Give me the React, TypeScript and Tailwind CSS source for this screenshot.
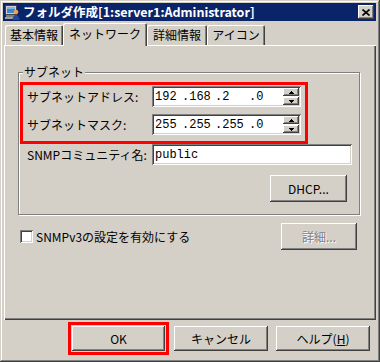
import React from "react";

const raised =
  "shadow-[inset_-1px_-1px_#404040,inset_1px_1px_#ffffff,inset_-2px_-2px_#808080,inset_2px_2px_#d4d0c8]";
const sunken =
  "shadow-[inset_1px_1px_#808080,inset_-1px_-1px_#ffffff,inset_2px_2px_#404040,inset_-2px_-2px_#d4d0c8]";

function TitleIcon() {
  return (
    <svg width="16" height="16" viewBox="0 0 16 16" shapeRendering="crispEdges">
      <rect x="1.5" y="1.5" width="11" height="9" fill="#d4d0c8" stroke="#404040" />
      <rect x="3" y="3" width="8" height="6" fill="#3f86d0" />
      <rect x="3" y="3" width="8" height="2" fill="#7fb6ea" />
      <rect x="2" y="11" width="9" height="2" fill="#808080" />
      <rect x="1" y="13" width="11" height="2" fill="#a0a0a0" />
      <circle cx="12" cy="8" r="2.3" fill="#f2a04a" shapeRendering="auto" />
      <path d="M8.5 16 Q9 11 12 11 Q15 11 15.5 16 Z" fill="#1d4aa0" shapeRendering="auto" />
    </svg>
  );
}

function Spinner() {
  return (
    <div className="flex flex-col gap-[1px] mr-[2px]">
      {["up", "down"].map((d) => (
        <div key={d} className={`w-[16px] h-[8px] bg-[#d4d0c8] flex items-center justify-center ${raised}`}>
          <svg width="5" height="3" viewBox="0 0 5 3" shapeRendering="crispEdges">
            {d === "up" ? <polygon points="2.5,0 5,3 0,3" fill="#000" /> : <polygon points="0,0 5,0 2.5,3" fill="#000" />}
          </svg>
        </div>
      ))}
    </div>
  );
}

function IpField({ parts }: { parts: string[] }) {
  return (
    <div className={`w-[149px] h-[21px] bg-white flex items-center ${sunken}`}>
      <div className="flex flex-1 pl-[3px] font-['Liberation_Mono',monospace] text-[12px] leading-none">
        <span className="w-[27px]">{parts[0]}</span>
        <span className="w-[33px]">.{parts[1]}</span>
        <span className="w-[34px]">.{parts[2]}</span>
        <span>.{parts[3]}</span>
      </div>
      <Spinner />
    </div>
  );
}

function Tab({ label, active, w }: { label: string; active?: boolean; w: string }) {
  if (active) {
    return (
      <div
        className={`${w} h-[23px] mb-[-1px] relative z-10 bg-[#d4d0c8] rounded-t-[2px] flex items-center justify-center pb-[2px] shadow-[inset_1px_1px_#ffffff,inset_-1px_0_#404040,inset_-2px_0_#808080]`}
      >
        {label}
      </div>
    );
  }
  return (
    <div
      className={`${w} h-[20px] bg-[#d4d0c8] rounded-t-[2px] flex items-center justify-center shadow-[inset_1px_1px_#ffffff,inset_-1px_0_#404040,inset_-2px_0_#808080]`}
    >
      {label}
    </div>
  );
}

export default function App() {
  return (
    <div className="w-[380px] h-[362px] bg-[#d4d0c8] p-[3px] flex flex-col text-black text-[12px] font-['Noto_Sans_CJK_JP',sans-serif] shadow-[inset_-1px_-1px_#404040,inset_1px_1px_#d4d0c8,inset_-2px_-2px_#808080,inset_2px_2px_#ffffff]">
      {/* title bar */}
      <div className="h-[18px] w-[373px] bg-[#0a246a] flex items-center pl-[1px] pr-[2px]">
        <TitleIcon />
        <span className="ml-[3px] text-white font-bold text-[12.5px] leading-none">フォルダ作成[1:server1:Administrator]</span>
        <div className={`ml-auto w-[16px] h-[14px] bg-[#d4d0c8] flex items-center justify-center ${raised}`}>
          <svg width="8" height="7" viewBox="0 0 8 7">
            <path d="M0.5 0.5 L7.5 6.5 M7.5 0.5 L0.5 6.5" stroke="#000" strokeWidth="1.6" />
          </svg>
        </div>
      </div>

      {/* tabs */}
      <div className="mt-[2px] h-[22px] flex items-end pl-[2px] leading-none">
        <Tab label="基本情報" w="w-[58px]" />
        <Tab label="ネットワーク" w="w-[84px]" active />
        <Tab label="詳細情報" w="w-[60px]" />
        <Tab label="アイコン" w="w-[58px]" />
      </div>

      {/* panel */}
      <div className="ml-[1px] w-[372px] h-[275px] flex flex-col shadow-[inset_1px_1px_#ffffff,inset_-1px_-1px_#404040,inset_-2px_-2px_#808080]">
        <div className="ml-[14px] mt-[27px] w-[342px] h-[143px] relative border border-[#808080] shadow-[inset_1px_1px_#ffffff,1px_1px_#ffffff] flex flex-col pl-[1px] pt-[9px]">
          <span className="absolute -top-[9px] left-[4px] bg-[#d4d0c8] px-[1px] leading-[16px]">サブネット</span>

          <div className="w-[288px] h-[62px] border-[3px] border-[#ff0000] flex flex-col pl-[4px] pt-[1px] gap-[7px]">
            <div className="h-[21px] flex items-center">
              <span className="w-[125px]">サブネットアドレス:</span>
              <IpField parts={["192", "168", "2", "0"]} />
            </div>
            <div className="h-[21px] flex items-center">
              <span className="w-[125px]">サブネットマスク:</span>
              <IpField parts={["255", "255", "255", "0"]} />
            </div>
          </div>

          <div className="h-[21px] flex items-center pl-[7px]">
            <span className="w-[125px]">SNMPコミュニティ名:</span>
            <div className={`w-[200px] h-[21px] bg-white flex items-center pl-[3px] font-['Liberation_Mono',monospace] text-[12px] ${sunken}`}>
              public
            </div>
          </div>

          <div className={`self-end mr-[12px] mt-[10px] w-[77px] h-[27px] bg-[#d4d0c8] flex items-center justify-center ${raised}`}>
            DHCP...
          </div>
        </div>

        <div className="mt-[8px] h-[27px] flex items-center">
          <div className={`ml-[16px] w-[13px] h-[13px] bg-white ${sunken}`} />
          <span className="ml-[3px]">SNMPv3の設定を有効にする</span>
          <div
            className={`ml-auto mr-[19px] w-[76px] h-[27px] bg-[#d4d0c8] flex items-center justify-center text-[#808080] text-shadow-[1px_1px_#ffffff] ${raised}`}
          >
            詳細...
          </div>
        </div>
      </div>

      {/* buttons */}
      <div className="mt-[2px] flex items-center">
        <div className="ml-[65px] border-[3px] border-[#ff0000] px-[1px] py-[1px]">
          <div className={`w-[93px] h-[25px] bg-[#d4d0c8] flex items-center justify-center ${raised}`}>OK</div>
        </div>
        <div className={`ml-[5px] w-[94px] h-[25px] bg-[#d4d0c8] flex items-center justify-center ${raised}`}>キャンセル</div>
        <div className={`ml-[8px] w-[94px] h-[25px] bg-[#d4d0c8] flex items-center justify-center ${raised}`}>
          ヘルプ(<span className="underline">H</span>)
        </div>
      </div>
    </div>
  );
}
